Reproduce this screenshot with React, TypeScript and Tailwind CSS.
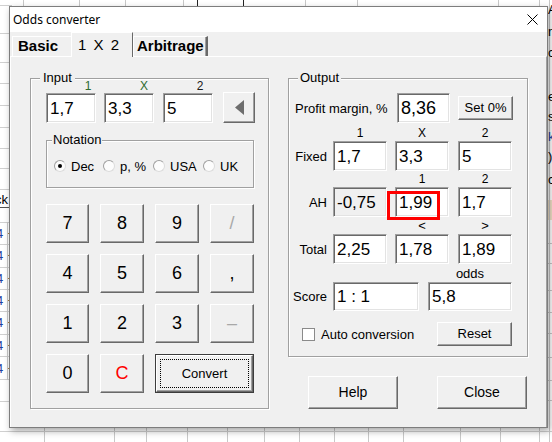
import React from "react";

const editBase =
  "flex items-center pl-[3px] border border-t-[#a0a0a0] border-l-[#a0a0a0] border-r-white border-b-white shadow-[inset_1px_1px_0_#696969,inset_-1px_-1px_0_#e3e3e3] text-[17px] leading-none text-black";
const edit = `${editBase} bg-white`;
const editRO = `${editBase} bg-[#f0f0f0]`;

const btn =
  "flex items-center justify-center bg-[#f0f0f0] border border-t-white border-l-white border-r-[#696969] border-b-[#696969] shadow-[inset_-1px_-1px_0_#a0a0a0]";

const groupBox =
  "relative border border-[#a0a0a0] shadow-[inset_1px_1px_0_#fff,1px_1px_0_#fff]";

function Backdrop() {
  const topX = [23, 79, 125, 183, 197, 243, 305, 357, 498, 539];
  const bottomX = [44, 114, 146, 187, 227, 264, 299, 334, 368, 403, 460, 500, 539];
  const leftY = [5, 33, 62, 83, 105, 127, 148, 168, 189, 222, 244, 267, 289, 311, 334, 356, 379, 401];
  const blueRows = [233, 255, 278, 300, 322, 345, 368];
  const rightY = [243, 263, 290, 312, 333, 357, 380, 400];
  return (
    <svg className="absolute inset-0" width="552" height="442">
      <rect width="552" height="442" fill="#ffffff" />
      {topX.map((x) => (
        <line key={"t" + x} x1={x + 0.5} y1="0" x2={x + 0.5} y2="8" stroke="#c8c8c8" />
      ))}
      <rect x="197.5" y="-2" width="46" height="9" fill="none" stroke="#222" />
      {bottomX.map((x) => (
        <line key={"b" + x} x1={x + 0.5} y1="426" x2={x + 0.5} y2="442" stroke="#c8c8c8" />
      ))}
      <line x1="0" y1="431.5" x2="552" y2="431.5" stroke="#d0d0d0" />
      {leftY.map((y) => (
        <line key={"l" + y} x1="0" y1={y + 0.5} x2="12" y2={y + 0.5} stroke="#d0d0d0" />
      ))}
      <line x1="0" y1="207.5" x2="12" y2="207.5" stroke="#555" />
      <text x="-5" y="204" fontSize="13" fontFamily="Liberation Sans, Arial, sans-serif" fill="#000">
        ck
      </text>
      {blueRows.map((y) => (
        <g key={"r" + y}>
          <text x="-4" y={y + 5} fontSize="13" fontFamily="Liberation Sans, Arial, sans-serif" fill="#1f3fa0">
            4
          </text>
          <line x1="7" y1={y + 0.5} x2="9" y2={y + 0.5} stroke="#b08040" />
        </g>
      ))}
      <line x1="7.5" y1="222" x2="7.5" y2="380" stroke="#c8c8c8" />
      {rightY.map((y) => (
        <line key={"ry" + y} x1="546" y1={y + 0.5} x2="552" y2={y + 0.5} stroke="#c8c8c8" />
      ))}
      <rect x="546" y="200" width="6" height="20" fill="#f3e2c8" />
      <line x1="549.5" y1="0" x2="549.5" y2="442" stroke="#c8c8c8" />
      {[
        ["A", 14],
        ["n", 36],
        ["c", 57],
        ["e", 101],
        ["s", 121],
        ["k", 141],
        [")", 161],
        ["c", 184],
      ].map(([t, y], i) => (
        <text
          key={"rt" + i}
          x="548"
          y={y as number}
          fontSize="13"
          fontFamily="Liberation Sans, Arial, sans-serif"
          fill={t === "k" ? "#1f3fa0" : "#000"}
        >
          {t}
        </text>
      ))}
    </svg>
  );
}

function Radio({ label, checked }: { label: string; checked?: boolean }) {
  return (
    <div className="flex items-center h-[14px]">
      <span className="w-[12px] h-[12px] rounded-full bg-[#fcfcfc] border border-t-[#a0a0a0] border-l-[#a0a0a0] border-r-[#dcdcdc] border-b-[#dcdcdc] flex items-center justify-center">
        {checked && <span className="w-[4px] h-[4px] rounded-full bg-black" />}
      </span>
      <span className="ml-[5px] text-[13px] leading-none">{label}</span>
    </div>
  );
}

function Key({ label, tone }: { label: string; tone?: "gray" | "red" }) {
  const color = tone === "gray" ? "text-[#a8a8a8]" : tone === "red" ? "text-[#ff0000]" : "text-black";
  return <div className={`${btn} h-[39px] text-[18px] ${color}`}>{label}</div>;
}

function InputGroup() {
  const keys: { label: string; tone?: "gray" | "red" }[] = [
    { label: "7" },
    { label: "8" },
    { label: "9" },
    { label: "/", tone: "gray" },
    { label: "4" },
    { label: "5" },
    { label: "6" },
    { label: "," },
    { label: "1" },
    { label: "2" },
    { label: "3" },
    { label: "–", tone: "gray" },
    { label: "0" },
    { label: "C", tone: "red" },
  ];
  return (
    <div className={`${groupBox} w-[239px] h-[331px] flex flex-col items-start`}>
      <span className="absolute -top-[9px] left-[9px] px-[3px] bg-[#f0f0f0] text-[13px] leading-[16px]">
        Input
      </span>
      <div className="mt-[1px] h-[13px] flex text-[12px] leading-[13px]">
        <span className="ml-[51px] w-[12px] text-center text-[#2e6b2e]">1</span>
        <span className="ml-[44px] w-[12px] text-center text-[#2e6b2e]">X</span>
        <span className="ml-[44px] w-[12px] text-center text-[#1a1a1a]">2</span>
      </div>
      <div className="ml-[15px] flex items-start">
        <div className={`${edit} w-[50px] h-[30px]`}>1,7</div>
        <div className={`${edit} ml-[8px] w-[50px] h-[30px]`}>3,3</div>
        <div className={`${edit} ml-[9px] w-[50px] h-[30px]`}>5</div>
        <div className={`${btn} ml-[10px] -mt-[1px] w-[32px] h-[31px]`}>
          <svg width="9" height="15" viewBox="0 0 9 15">
            <path d="M9 0 L0 7.5 L9 15 Z" fill="#6d6d6d" />
          </svg>
        </div>
      </div>
      <div className={`${groupBox} mt-[17px] ml-[15px] w-[208px] h-[48px]`}>
        <span className="absolute -top-[9px] left-[5px] px-[1px] bg-[#f0f0f0] text-[13px] leading-[16px]">
          Notation
        </span>
        <div className="pt-[18px] pl-[7px] grid grid-cols-[49px_50px_50px_auto]">
          <Radio label="Dec" checked />
          <Radio label="p, %" />
          <Radio label="USA" />
          <Radio label="UK" />
        </div>
      </div>
      <div className="mt-[16px] ml-[15px] grid grid-cols-[43px_44px_44px_44px] gap-x-[11px] gap-y-[11px]">
        {keys.map((k, i) => (
          <Key key={i} label={k.label} tone={k.tone} />
        ))}
        <div className="col-span-2 h-[39px] border border-[#3c3c3c]">
          <div className={`${btn} relative w-full h-full text-[13px]`}>
            <span className="absolute inset-[3px] border border-dotted border-black" />
            Convert
          </div>
        </div>
      </div>
    </div>
  );
}

function Label({ children }: { children: React.ReactNode }) {
  return <span className="w-[38px] text-right text-[13px] leading-none">{children}</span>;
}

function OutputGroup() {
  return (
    <div className={`${groupBox} w-[240px] h-[279px] flex flex-col items-start`}>
      <span className="absolute -top-[9px] left-[9px] px-[2px] bg-[#f0f0f0] text-[13px] leading-[16px]">
        Output
      </span>
      <div className="mt-[14px] flex items-center h-[30px]">
        <span className="w-[108px] pl-[6px] text-[13px] leading-none">Profit margin, %</span>
        <div className={`${edit} w-[53px] h-[30px] text-[18px]`}>8,36</div>
        <div className={`${btn} ml-[8px] w-[55px] h-[24px] text-[13px]`}>Set 0%</div>
      </div>
      <div className="mt-[4px] h-[13px] flex text-[12px] leading-[13px]">
        <span className="ml-[44px] w-[54px] text-center">1</span>
        <span className="ml-[8px] w-[54px] text-center">X</span>
        <span className="ml-[9px] w-[54px] text-center">2</span>
      </div>
      <div className="mt-[1px] flex items-center h-[30px]">
        <Label>Fixed</Label>
        <div className={`${edit} ml-[6px] w-[54px] h-[30px]`}>1,7</div>
        <div className={`${edit} ml-[8px] w-[54px] h-[30px]`}>3,3</div>
        <div className={`${edit} ml-[9px] w-[54px] h-[30px]`}>5</div>
      </div>
      <div className="mt-[2px] h-[13px] flex text-[12px] leading-[13px]">
        <span className="ml-[106px] w-[54px] text-center">1</span>
        <span className="ml-[9px] w-[54px] text-center">2</span>
      </div>
      <div className="mt-[1px] flex items-center h-[30px]">
        <Label>AH</Label>
        <div className={`${editRO} ml-[6px] w-[54px] h-[30px]`}>-0,75</div>
        <div className={`${edit} relative ml-[8px] w-[54px] h-[30px]`}>
          1,99
          <span className="absolute -left-[9px] top-[3px] w-[53px] h-[29px] border-[3px] border-[#ff0000]" />
        </div>
        <div className={`${edit} ml-[9px] w-[54px] h-[30px]`}>1,7</div>
      </div>
      <div className="mt-[2px] h-[13px] flex text-[13px] leading-[13px]">
        <span className="ml-[106px] w-[54px] text-center">&lt;</span>
        <span className="ml-[9px] w-[54px] text-center">&gt;</span>
      </div>
      <div className="mt-[2px] flex items-center h-[30px]">
        <Label>Total</Label>
        <div className={`${edit} ml-[6px] w-[54px] h-[30px]`}>2,25</div>
        <div className={`${edit} ml-[8px] w-[54px] h-[30px]`}>1,78</div>
        <div className={`${edit} ml-[9px] w-[54px] h-[30px]`}>1,89</div>
      </div>
      <div className="mt-[3px] h-[13px] flex text-[13px] leading-[13px]">
        <span className="ml-[139px] w-[84px] text-center">odds</span>
      </div>
      <div className="mt-[2px] flex items-center h-[29px]">
        <Label>Score</Label>
        <div className={`${edit} ml-[6px] w-[86px] h-[29px]`}>1 : 1</div>
        <div className={`${edit} ml-[9px] w-[84px] h-[29px]`}>5,8</div>
      </div>
      <div className="mt-[11px] flex items-center h-[24px]">
        <div className="w-[148px] flex items-center">
          <span className="ml-[13px] w-[13px] h-[13px] bg-white border border-[#8a8a8a]" />
          <span className="ml-[6px] text-[13px] leading-none">Auto conversion</span>
        </div>
        <div className={`${btn} w-[75px] h-[24px] text-[13px]`}>Reset</div>
      </div>
    </div>
  );
}

export default function App() {
  return (
    <div className="relative w-[552px] h-[442px] overflow-hidden font-['Liberation_Sans',Arial,sans-serif] text-black">
      <Backdrop />
      <div className="absolute left-[9px] top-[6px] w-[539px] h-[422px] border border-[#7d7d7d] bg-[#f0f0f0] flex flex-col shadow-[2px_3px_7px_rgba(0,0,0,0.35)]">
        <div className="h-[25px] bg-white flex items-center justify-between pl-[3px] pr-[9px]">
          <span className="text-[12px] font-['Noto_Sans',sans-serif]">Odds converter</span>
          <svg width="11" height="11" viewBox="0 0 11 11">
            <path d="M0.5 0.5 L10.5 10.5 M10.5 0.5 L0.5 10.5" stroke="#000" strokeWidth="1" />
          </svg>
        </div>
        <div className="h-[24px] flex items-end pl-[2px]">
          <div className="w-[59px] h-[20px] border-t border-l border-white flex items-center pl-[5px] text-[15px] font-bold">
            Basic
          </div>
          <div className="relative z-10 -mb-[1px] w-[62px] h-[25px] bg-[#f0f0f0] border-t border-l border-white border-r border-r-[#696969] flex items-center pl-[6px] text-[15px] [word-spacing:3px]">
            1 X 2
          </div>
          <div className="w-[75px] h-[20px] border-t border-l border-white border-r-2 border-r-[#696969] shadow-[inset_-1px_0_0_#a0a0a0] flex items-center pl-[3px] text-[15px] font-bold">
            Arbitrage
          </div>
        </div>
        <div className="flex-1 border-t border-white border-l border-r border-r-[#a0a0a0] flex items-start pt-[21px] pl-[19px]">
          <InputGroup />
          <div className="ml-[19px] flex flex-col items-start">
            <OutputGroup />
            <div className="mt-[19px] flex">
              <div className={`${btn} ml-[20px] w-[90px] h-[33px] text-[14px]`}>Help</div>
              <div className={`${btn} ml-[39px] w-[90px] h-[33px] text-[14px]`}>Close</div>
            </div>
          </div>
        </div>
      </div>
    </div>
  );
}
